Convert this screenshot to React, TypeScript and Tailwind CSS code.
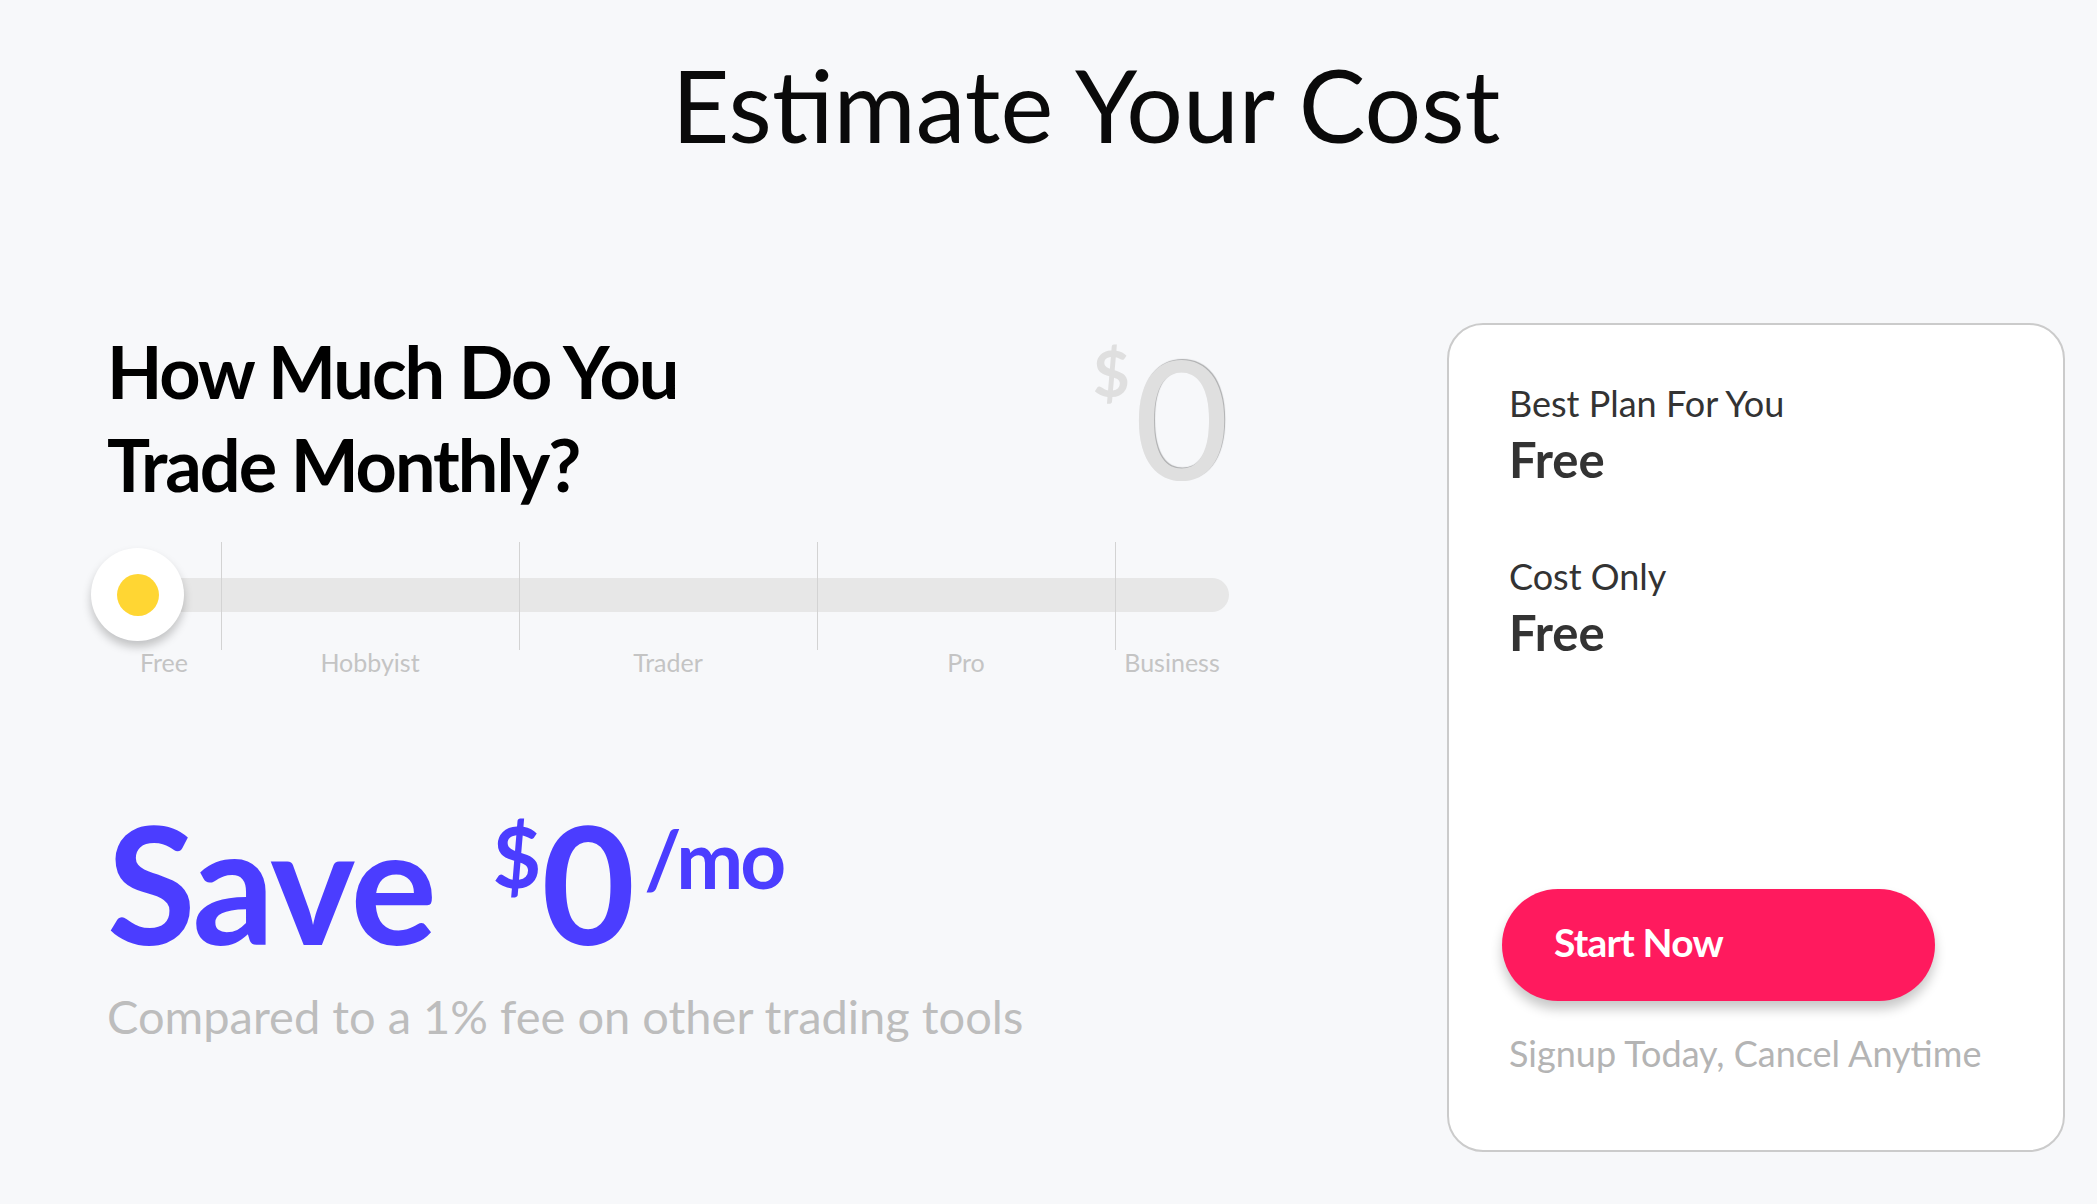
import React from "react";

const tiers = ["Free", "Hobbyist", "Trader", "Pro", "Business"];

export default function App() {
  return (
    <div className="min-h-screen bg-[#f7f8fa] font-['Lato',sans-serif] pl-[107px] pr-[32px]">
      <h1 className="pt-[54px] text-center text-[100px] leading-none font-normal text-[#0a0a0a]">
        Estimate Your Cost
      </h1>

      <div className="mt-[169px] flex items-start gap-[218px]">
        {/* left: calculator */}
        <div className="w-[1122px] shrink-0">
          <div className="flex items-start justify-between">
            <h2 className="pt-[2px] text-[72px] leading-[93px] font-bold tracking-[-2px] text-black">
              How Much Do You
              <br />
              Trade Monthly?
            </h2>
            <div className="mt-[12px] flex items-start text-[#dfdfdf]">
              <span className="mt-[6px] mr-[4px] text-[64px] leading-none font-bold">$</span>
              <span className="text-[164px] leading-none [text-shadow:1px_-1px_1px_rgba(0,0,0,0.3)]">0</span>
            </div>
          </div>

          {/* slider */}
          <div className="relative mt-[31px] h-[108px]">
            <div className="absolute inset-x-0 top-[36px] h-[34px] rounded-full bg-[#e7e7e7]" />
            <div className="absolute inset-0 grid grid-cols-[114px_298px_298px_298px_1fr]">
              {tiers.map((t, i) => (
                <div key={t} className={i > 0 ? "border-l border-[#d3d3d3]" : ""} />
              ))}
            </div>
            <div className="absolute left-[-16px] top-[6px] flex h-[93px] w-[93px] items-center justify-center rounded-full bg-white shadow-[0_6px_10px_rgba(0,0,0,0.22)]">
              <div className="h-[42px] w-[42px] rounded-full bg-[#ffd633]" />
            </div>
          </div>
          <div className="grid grid-cols-[114px_298px_298px_298px_1fr] pt-[1px] text-center text-[25px] leading-[22px] text-[#c4c4c4]">
            {tiers.map((t) => (
              <span key={t}>{t}</span>
            ))}
          </div>

          {/* savings */}
          <div className="mt-[129px] flex items-start font-bold text-[#4b3dff]">
            <span className="text-[162px] leading-none tracking-[-2.5px]">Save</span>
            <span className="ml-[58px] mt-[12px] text-[84px] leading-none">$</span>
            <span className="text-[162px] leading-none tracking-[-3px]">0</span>
            <span className="ml-[12px] mt-[16px] text-[80px] leading-none tracking-[-3px]">/mo</span>
          </div>
          <p className="mt-[29px] text-[47px] leading-none text-[#bdbdbd]">
            Compared to a 1% fee on other trading tools
          </p>
        </div>

        {/* right: plan card */}
        <div className="h-[829px] w-[618px] shrink-0 rounded-[36px] border-2 border-[#cbcbcb] bg-white px-[60px] pt-[60px]">
          <p className="text-[36px] leading-none text-[#333]">Best Plan For You</p>
          <p className="mt-[14px] text-[49px] leading-none font-bold text-[#333]">Free</p>
          <p className="mt-[74px] text-[36px] leading-none text-[#333]">Cost Only</p>
          <p className="mt-[14px] text-[49px] leading-none font-bold text-[#333]">Free</p>

          <button className="ml-[-7px] mt-[232px] flex h-[112px] w-[433px] items-center rounded-full bg-[#ff1a5e] pb-[6px] pl-[52px] text-[39px] font-bold tracking-[-0.8px] text-white shadow-[0_8px_12px_rgba(0,0,0,0.22)]">
            Start Now
          </button>
          <p className="mt-[34px] text-[36px] leading-none text-[#b4b4b4]">
            Signup Today, Cancel Anytime
          </p>
        </div>
      </div>
    </div>
  );
}
